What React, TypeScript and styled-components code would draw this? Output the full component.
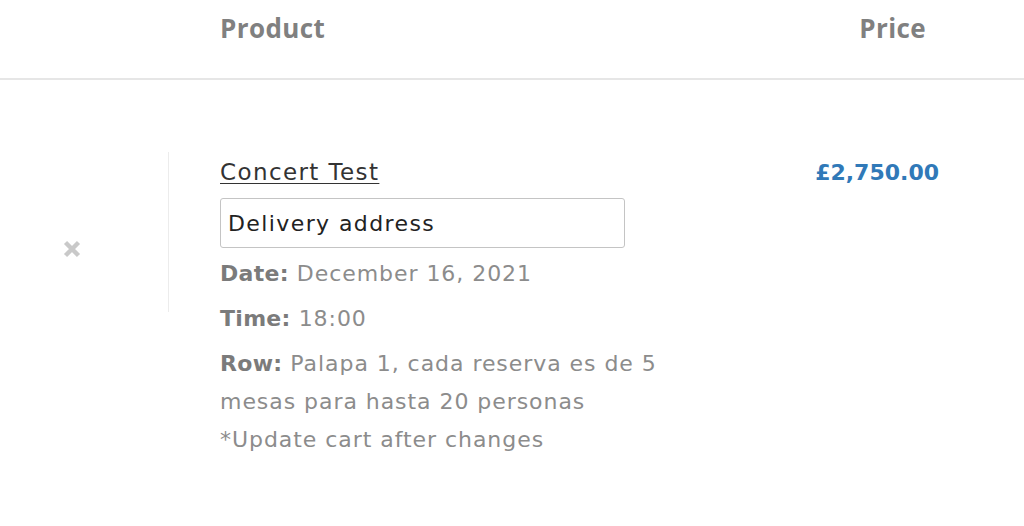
import React from "react";
import styled, { createGlobalStyle } from "styled-components";

const Global = createGlobalStyle`
  html, body { margin: 0; padding: 0; background: #fff; }
  body { font-family: "DejaVu Sans", "Open Sans", sans-serif; -webkit-font-smoothing: antialiased; }
`;

const Page = styled.div`
  width: 1024px;
  height: 526px;
  overflow: hidden;
  background: #fff;
`;

const HeaderRow = styled.div`
  display: grid;
  grid-template-columns: 220px 1fr auto;
  height: 80px;
  border-bottom: 2px solid #e6e6e6;
  box-sizing: border-box;
`;

const HeaderCell = styled.div<{ $pr?: number }>`
  font-family: "Open Sans", sans-serif;
  font-weight: 700;
  font-size: 26px;
  letter-spacing: 0.4px;
  color: #808080;
  padding-top: 10px;
  line-height: 36px;
  padding-right: ${(p) => p.$pr ?? 0}px;
`;

const ItemRow = styled.div`
  display: grid;
  grid-template-columns: 169px 1fr auto;
  padding-top: 72px;
  align-items: start;
`;

const RemoveCell = styled.div`
  height: 160px;
  border-right: 1px solid #ececec;
  display: flex;
  justify-content: center;
  align-items: flex-start;
  padding-right: 25px;
  padding-top: 88px;
  box-sizing: border-box;
`;

const RemoveButton = styled.button`
  border: 0;
  padding: 0;
  background: none;
  width: 18px;
  height: 18px;
  display: block;
  cursor: pointer;
`;

const ProductCell = styled.div`
  padding-left: 51px;
  display: flex;
  flex-direction: column;
`;

const ProductLink = styled.a`
  font-size: 23px;
  letter-spacing: 1.4px;
  line-height: 38px;
  margin-top: 1px;
  color: #333;
  text-decoration: underline;
  text-underline-offset: 3px;
  text-decoration-thickness: 1px;
  align-self: flex-start;
`;

const AddressInput = styled.input`
  width: 405px;
  height: 50px;
  box-sizing: border-box;
  margin-top: 7px;
  border: 1px solid #c4c4c4;
  border-radius: 3px;
  padding: 0 7px;
  font-family: inherit;
  font-size: 22px;
  letter-spacing: 1.4px;
  color: #222;
  outline: none;
  &::placeholder { color: #222; opacity: 1; }
`;

const Meta = styled.p<{ $mt: number }>`
  margin: ${(p) => p.$mt}px 0 0;
  font-size: 22px;
  letter-spacing: 0.95px;
  line-height: 38px;
  color: #8c8c8c;
`;

const Label = styled.strong`
  font-weight: 700;
  letter-spacing: 0.3px;
  color: #7b7b7b;
`;

const PriceCell = styled.div`
  padding-right: 85px;
  padding-top: 2px;
  font-size: 22px;
  font-weight: 700;
  line-height: 38px;
  color: #3079b8;
`;

export default function App() {
  return (
    <Page>
      <Global />
      <HeaderRow>
        <div />
        <HeaderCell>Product</HeaderCell>
        <HeaderCell $pr={98}>Price</HeaderCell>
      </HeaderRow>
      <ItemRow>
        <RemoveCell>
          <RemoveButton aria-label="Remove this item">
            <svg width="18" height="18" viewBox="0 0 18 18">
              <path d="M2.5 2.5 L15.5 15.5 M15.5 2.5 L2.5 15.5" stroke="#c9c9c9" strokeWidth="4.4" strokeLinecap="butt" />
            </svg>
          </RemoveButton>
        </RemoveCell>
        <ProductCell>
          <ProductLink href="#">Concert Test</ProductLink>
          <AddressInput placeholder="Delivery address" />
          <Meta $mt={7}>
            <Label>Date:</Label> December 16, 2021
          </Meta>
          <Meta $mt={7}>
            <Label>Time:</Label> 18:00
          </Meta>
          <Meta $mt={7}>
            <Label>Row:</Label> Palapa 1, cada reserva es de 5
            <br />
            mesas para hasta 20 personas
            <br />
            *Update cart after changes
          </Meta>
        </ProductCell>
        <PriceCell>£2,750.00</PriceCell>
      </ItemRow>
    </Page>
  );
}
